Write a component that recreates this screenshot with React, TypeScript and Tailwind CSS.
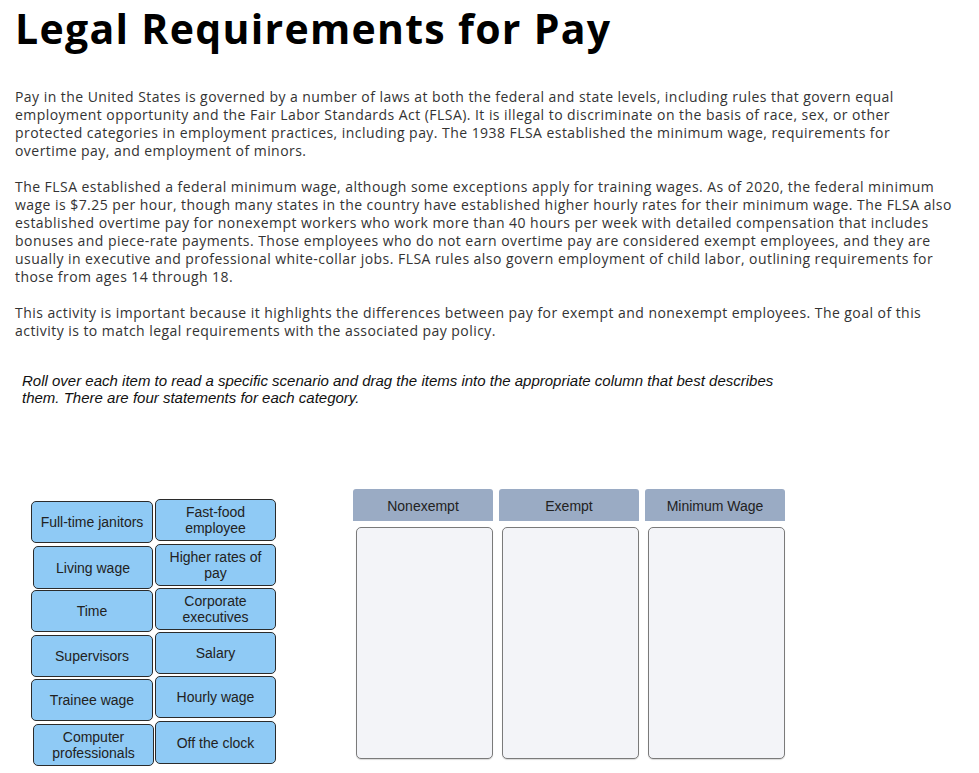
type Card = { label: string; cls: string }

const LEFT: Card[] = [
  { label: 'Full-time janitors', cls: 'mt-[2px] h-[42px] w-[122px]' },
  { label: 'Living wage', cls: 'mt-[3px] ml-[2px] h-[43px] w-[120px]' },
  { label: 'Time', cls: 'mt-[1px] h-[42px] w-[122px]' },
  { label: 'Supervisors', cls: 'mt-[3px] h-[42px] w-[122px]' },
  { label: 'Trainee wage', cls: 'mt-[2px] h-[42px] w-[122px]' },
  { label: 'Computer professionals', cls: 'mt-[3px] ml-[2px] h-[42px] w-[121px]' },
]

const RIGHT: Card[] = [
  { label: 'Fast-food employee', cls: 'h-[42px] w-[121px]' },
  { label: 'Higher rates of pay', cls: 'mt-[3px] h-[42px] w-[121px]' },
  { label: 'Corporate executives', cls: 'mt-[2px] h-[42px] w-[121px]' },
  { label: 'Salary', cls: 'mt-[2px] h-[42px] w-[121px]' },
  { label: 'Hourly wage', cls: 'mt-[2px] h-[42px] w-[121px]' },
  { label: 'Off the clock', cls: 'mt-[3px] h-[43px] w-[121px]' },
]

const COLUMNS = ['Nonexempt', 'Exempt', 'Minimum Wage']

function DragCard({ card }: { card: Card }) {
  return (
    <div
      className={`flex items-center justify-center rounded-[5px] border border-[#2b2b2b] bg-[#8fcaf5] px-2 text-center text-[14px] leading-[16px] text-[#222] ${card.cls}`}
    >
      {card.label}
    </div>
  )
}

export default function App() {
  return (
    <div className="min-h-[773px] w-[979px] bg-white px-[15px] font-['Open_Sans','Lato',sans-serif] text-[#333]">
      <h1 className="text-[41px] font-bold leading-[56px] tracking-[1.3px] text-black">
        Legal Requirements for Pay
      </h1>

      <div className="mt-[32px] space-y-[18px] whitespace-nowrap text-[14px] leading-[18px] tracking-[0.45px]">
        <p>
          Pay in the United States is governed by a number of laws at both the federal and state levels, including rules that govern equal
          <br />
          employment opportunity and the Fair Labor Standards Act (FLSA). It is illegal to discriminate on the basis of race, sex, or other
          <br />
          protected categories in employment practices, including pay. The 1938 FLSA established the minimum wage, requirements for
          <br />
          overtime pay, and employment of minors.
        </p>
        <p>
          The FLSA established a federal minimum wage, although some exceptions apply for training wages. As of 2020, the federal minimum
          <br />
          wage is $7.25 per hour, though many states in the country have established higher hourly rates for their minimum wage. The FLSA also
          <br />
          established overtime pay for nonexempt workers who work more than 40 hours per week with detailed compensation that includes
          <br />
          bonuses and piece-rate payments. Those employees who do not earn overtime pay are considered exempt employees, and they are
          <br />
          usually in executive and professional white-collar jobs. FLSA rules also govern employment of child labor, outlining requirements for
          <br />
          those from ages 14 through 18.
        </p>
        <p>
          This activity is important because it highlights the differences between pay for exempt and nonexempt employees. The goal of this
          <br />
          activity is to match legal requirements with the associated pay policy.
        </p>
      </div>

      <p className="mt-[32px] pl-[7px] font-['Liberation_Sans',Arial,sans-serif] text-[15px] italic leading-[17px] text-[#111]">
        Roll over each item to read a specific scenario and drag the items into the appropriate column that best describes
        <br />
        them. There are four statements for each category.
      </p>

      <div className="mt-[83px] flex font-['Liberation_Sans',Arial,sans-serif]">
        <div className="ml-[16px] flex gap-[2px] pt-[10px]">
          <div className="flex w-[122px] flex-col">
            {LEFT.map((c) => (
              <DragCard key={c.label} card={c} />
            ))}
          </div>
          <div className="flex flex-col">
            {RIGHT.map((c) => (
              <DragCard key={c.label} card={c} />
            ))}
          </div>
        </div>

        <div className="ml-[77px] flex gap-[6px]">
          {COLUMNS.map((name) => (
            <div key={name} className="flex w-[140px] flex-col">
              <div className="flex h-[32px] items-center justify-center rounded-t-[3px] bg-[#9aabc4] pt-[3px] text-[14px] text-[#222]">
                {name}
              </div>
              <div className="ml-[3px] mt-[6px] h-[232px] w-[137px] rounded-[5px] border border-[#7a7a7a] bg-[#f3f4f8] shadow-[0_1px_1px_rgba(0,0,0,0.15)]" />
            </div>
          ))}
        </div>
      </div>
    </div>
  )
}
